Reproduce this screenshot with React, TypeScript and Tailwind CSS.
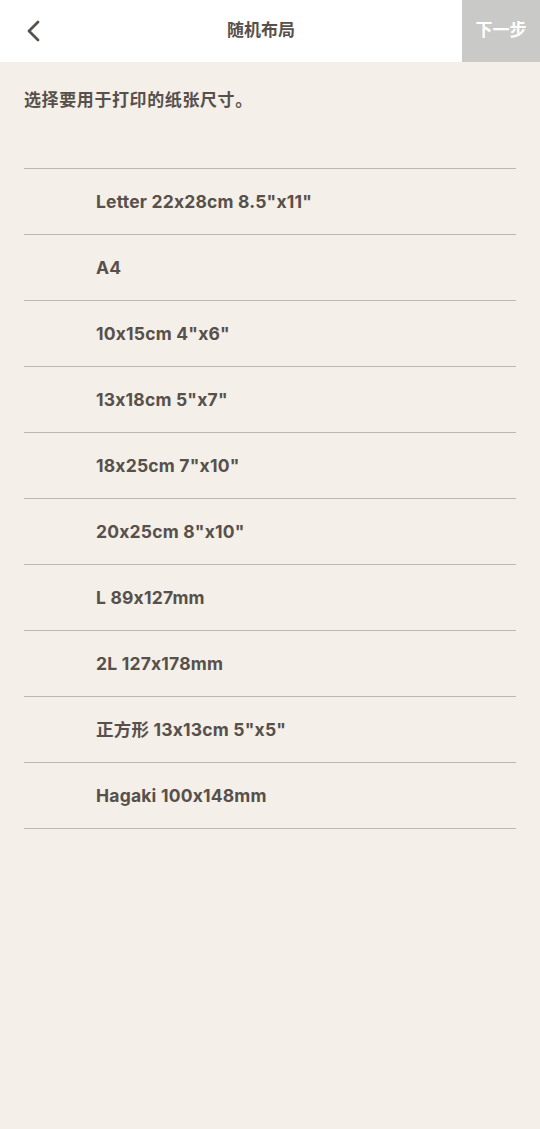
import React from "react";

const items = [
  "Letter 22x28cm 8.5\"x11\"",
  "A4",
  "10x15cm 4\"x6\"",
  "13x18cm 5\"x7\"",
  "18x25cm 7\"x10\"",
  "20x25cm 8\"x10\"",
  "L 89x127mm",
  "2L 127x178mm",
  "正方形 13x13cm 5\"x5\"",
  "Hagaki 100x148mm",
];

export default function App() {
  return (
    <div
      className="min-h-[1129px] w-[540px] bg-[#f4efe9] text-[#57504b]"
      style={{ fontFamily: 'Inter, "Noto Sans CJK SC", sans-serif', fontFeatureSettings: '"calt" 0' }}
    >
      <header className="flex h-[62px] items-stretch bg-white">
        <button className="flex w-[60px] items-center pl-[24px]">
          <svg width="18" height="24" viewBox="0 0 18 24" fill="none">
            <path d="M14 3 L5 12 L14 21" stroke="#57504b" strokeWidth="2.8" strokeLinecap="round" strokeLinejoin="round" />
          </svg>
        </button>
        <div className="flex flex-1 items-center justify-center text-[17px] font-bold text-[#57504b]">
          随机布局
        </div>
        <button className="flex w-[78px] items-center justify-center bg-[#c9c9c7] text-[17px] font-bold text-white">
          下一步
        </button>
      </header>
      <p className="px-[24px] pt-[26px] text-[17px] font-bold leading-[24px] tracking-[0.6px]">
        选择要用于打印的纸张尺寸。
      </p>
      <ul className="mx-[24px] mt-[56px] border-t-[1.5px] border-[#bcb7b1]">
        {items.map((t) => (
          <li
            key={t}
            className="flex h-[66px] items-center border-b-[1.5px] border-[#bcb7b1] pl-[72px] pt-[2px] text-[17.5px] font-bold tracking-[0.2px]"
          >
            {t}
          </li>
        ))}
      </ul>
    </div>
  );
}
